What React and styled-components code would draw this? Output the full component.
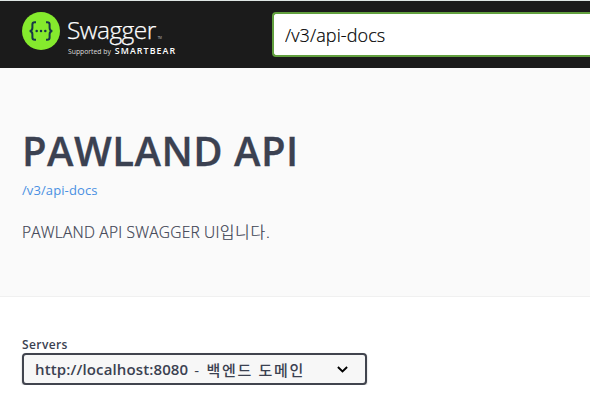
import styled, { createGlobalStyle } from 'styled-components'

function SwaggerLogo() {
    return (
        <Logo href="/">
            <svg width="38" height="38" viewBox="0 0 38 38">
                <circle cx="19" cy="19" r="19" fill="#85ea2d" />
                <g fill="none" stroke="#173647" strokeWidth="2">
                    <path d="M14 10.2h-1.2c-1.7 0-2.4.8-2.4 2.3v3.2c0 2-.8 3.1-2.7 3.3 1.9.2 2.7 1.3 2.7 3.3v3.2c0 1.5.7 2.3 2.4 2.3H14" />
                    <path d="M24 10.2h1.2c1.7 0 2.4.8 2.4 2.3v3.2c0 2 .8 3.1 2.7 3.3-1.9.2-2.7 1.3-2.7 3.3v3.2c0 1.5-.7 2.3-2.4 2.3H24" />
                </g>
                <g fill="#173647">
                    <circle cx="14.7" cy="19" r="1.25" />
                    <circle cx="19" cy="19" r="1.25" />
                    <circle cx="23.3" cy="19" r="1.25" />
                </g>
            </svg>
            <LogoText>
                <Wordmark>Swagger<Trademark>TM</Trademark></Wordmark>
                <Tagline>Supported by <Brand>SMARTBEAR</Brand></Tagline>
            </LogoText>
        </Logo>
    )
}

function App() {
    return (
        <>
            <GlobalStyle />
            <Topbar>
                <SwaggerLogo />
                <UrlInput type="text" defaultValue="/v3/api-docs" />
            </Topbar>
            <Info>
                <Title>PAWLAND API</Title>
                <DocsLink href="#docs">/v3/api-docs</DocsLink>
                <Description>PAWLAND API SWAGGER UI<Korean>입니다.</Korean></Description>
            </Info>
            <Servers>
                <ServersLabel>Servers</ServersLabel>
                <ServerSelect type="button">
                    <span>http://localhost:8080</span>
                    <ServerName>- 백엔드 도메인</ServerName>
                    <svg width="11" height="7" viewBox="0 0 11 7" fill="none" stroke="#000" strokeWidth="1.9">
                        <path d="M.9 1 5.5 5.4 10.1 1" />
                    </svg>
                </ServerSelect>
            </Servers>
        </>
    )
}

export default App;


const GlobalStyle = createGlobalStyle`
  * {
    box-sizing: border-box;
  }
  body {
    margin: 0;
    background: #fff;
    color: #3b4151;
    font-family: "Open Sans", "Noto Sans CJK KR", sans-serif;
  }
`;

const Topbar = styled.header`
  display: flex;
  align-items: flex-start;
  height: 68px;
  padding: 11px 0 0 22px;
  border-top: 1px solid #dfe6e4;
  background: #1b1b1b;
`;

const Logo = styled.a`
  display: flex;
  flex: 0 0 250px;
  color: #fff;
  text-decoration: none;
`;

const LogoText = styled.div`
  padding-left: 7px;
`;

const Wordmark = styled.div`
  margin-top: 3px;
  font-size: 24.5px;
  font-weight: 300;
  line-height: 30px;
  letter-spacing: -0.55px;
  white-space: nowrap;
  -webkit-text-stroke: 0.25px #fff;
`;

const Trademark = styled.span`
  margin-left: 2px;
  font-size: 3px;
  letter-spacing: 0;
  -webkit-text-stroke: 0;
`;

const Tagline = styled.div`
  display: flex;
  align-items: baseline;
  gap: 4px;
  margin: -7px 0 0 1px;
  font-size: 6.8px;
  line-height: 12px;
  color: #ddd;
  white-space: nowrap;
`;

const Brand = styled.span`
  color: #fff;
  font-size: 8.8px;
  font-weight: 600;
  line-height: 8px;
  letter-spacing: 1.1px;
`;

const UrlInput = styled.input`
  flex: 1;
  min-width: 0;
  height: 45px;
  padding: 0 10px 0 11px;
  border: 2px solid #62a03f;
  border-right: 0;
  border-radius: 4px 0 0 4px;
  outline: none;
  background: #fff;
  color: #000;
  font-family: inherit;
  font-size: 18px;
  font-weight: 300;
  letter-spacing: 0.1px;
  -webkit-text-stroke: 0.2px #000;
`;

const Info = styled.section`
  height: 229px;
  padding: 55px 22px 0;
  border-bottom: 1px solid #f0f0f0;
  background: #fafafa;
`;

const Title = styled.h1`
  margin: 0;
  font-size: 40px;
  font-weight: 600;
  line-height: 56px;
  letter-spacing: 0.5px;
  white-space: nowrap;
  -webkit-text-stroke: 0.3px #3b4151;
`;

const DocsLink = styled.a`
  display: block;
  margin-top: 2px;
  color: #4990e2;
  font-size: 13px;
  line-height: 18px;
  letter-spacing: 0.1px;
  text-decoration: none;
`;

const Description = styled.p`
  margin: 22px 0 0;
  font-size: 15.5px;
  font-weight: 300;
  line-height: 22px;
  letter-spacing: 0.22px;
  white-space: nowrap;
  -webkit-text-stroke: 0.2px #3b4151;
`;

const Korean = styled.span`
  font-size: 16px;
  letter-spacing: 0.7px;
`;

const Servers = styled.section`
  padding: 39px 22px 0;
`;

const ServersLabel = styled.label`
  display: block;
  font-size: 12px;
  font-weight: 600;
  line-height: 17px;
  letter-spacing: 0.4px;
`;

const ServerSelect = styled.button`
  display: flex;
  align-items: center;
  width: 345px;
  height: 32px;
  padding: 0 17px 0 11px;
  border: 2px solid #41444e;
  border-radius: 4px;
  background: #f7f7f7;
  box-shadow: 0 1px 2px rgba(0, 0, 0, 0.25);
  color: #3b4151;
  font-family: inherit;
  font-size: 15px;
  font-weight: 600;
  letter-spacing: 0.13px;
  white-space: nowrap;
  svg {
    margin-left: auto;
  }
`;

const ServerName = styled.span`
  margin-left: 6px;
  font-weight: 500;
  letter-spacing: 1.7px;
`;
